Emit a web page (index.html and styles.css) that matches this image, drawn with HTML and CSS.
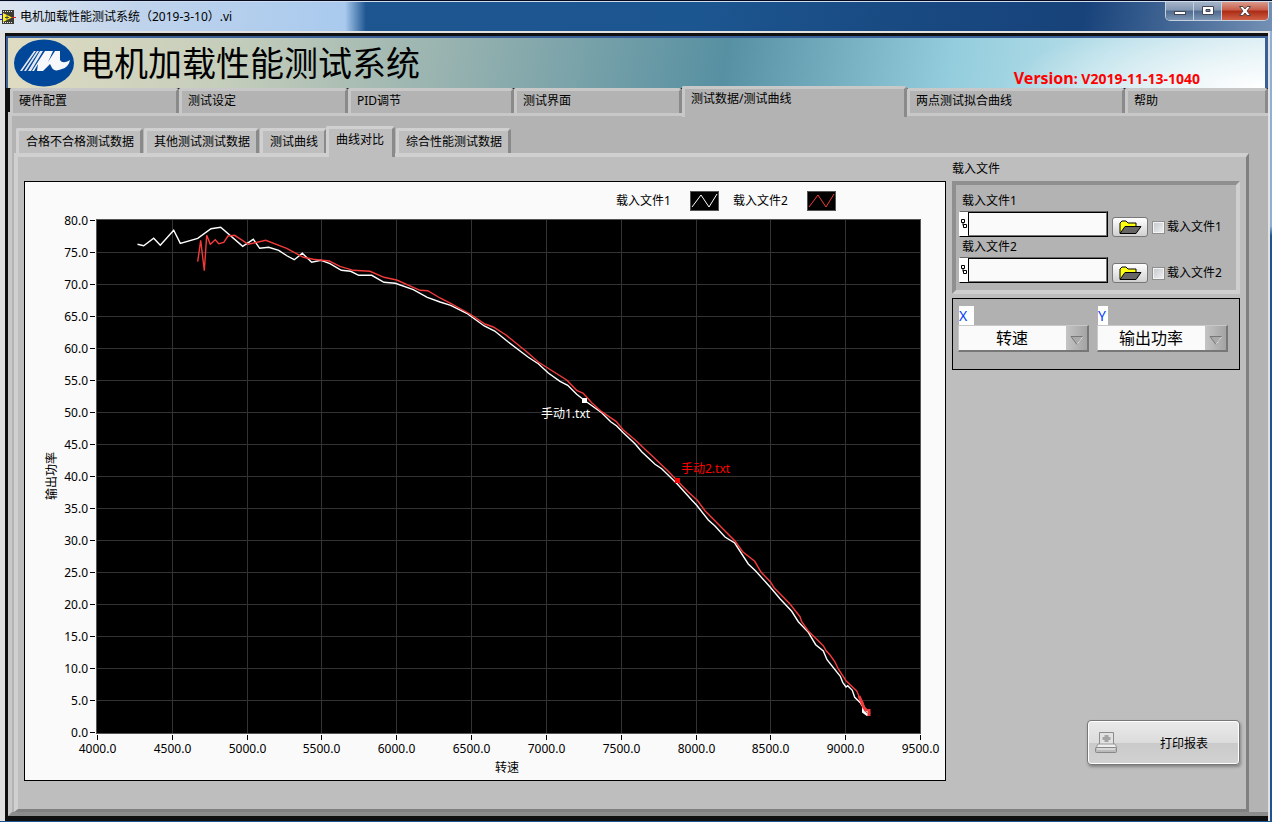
FILE: index.html
```html
<!DOCTYPE html>
<html lang="zh-CN">
<head>
    <meta charset="UTF-8">
    <meta name="viewport" content="width=device-width, initial-scale=1.0">
    <title>电机加载性能测试系统</title>
    <link rel="stylesheet" href="styles.css">
</head>
<body>
    <div class="window">
        <div class="titlebar">
            <svg class="app-icon" width="16" height="14" viewBox="0 0 16 14">
                <rect x="2" width="12" height="14" fill="#3c3c34"/>
                <path d="M3 1.5h10M3 12.5h10" stroke="#e8e8e0" stroke-dasharray="1 1"/>
                <path d="M0 4.5h3M0 9.5h3" stroke="#22c" />
                <path d="M12 7.5h4" stroke="#d22"/>
                <path d="M3 3l9 4.5-9 4.5z" fill="#ffee20"/>
                <path d="M5 7.5h4M7 5.5v4" stroke="#444"/>
            </svg>
            <span class="window-title">电机加载性能测试系统（2019-3-10）.vi</span>
            <div class="window-buttons">
                <button class="win-btn minimize" aria-label="最小化">
                    <svg width="12" height="12" viewBox="0 0 12 12"><rect x=".5" y="6.5" width="11" height="3" fill="#fff" stroke="#445"/></svg>
                </button>
                <button class="win-btn maximize" aria-label="最大化">
                    <svg width="12" height="12" viewBox="0 0 12 12"><path d="M.5 1.5h11v8H.5zM4 4.5h4v2H4z" fill="#fff" fill-rule="evenodd" stroke="#445"/></svg>
                </button>
                <button class="win-btn close" aria-label="关闭">
                    <svg width="12" height="12" viewBox="0 0 12 12"><path d="M.5 1.5H4L6 4l2-2.500h3.500L8 6l3.500 4.500H8L6 8l-2 2.500H.5L4 6z" fill="#fff" stroke="#544"/></svg>
                </button>
            </div>
        </div>

        <div class="client">
            <header class="banner">
                <svg class="logo" width="60" height="48" viewBox="0 0 60 48">
                    <ellipse cx="30" cy="24" rx="30" ry="23.5" fill="#00479a"/>
                    <path d="M6 32L20 12h2L8 32zM10 32L23 12h2L12 32zM14 32L26 12h3L17 32z" fill="#e4e8f2"/>
                    <path d="M18 32L31 12h8l-5 11 7-11h5v9c2 3 5 3 10 0-1 5-4 8-8 9-5 2-8 2-10-1l-2-4-7 7h-6l1-7-4 7z" fill="#f6f8fc"/>
                </svg>
                <h1>电机加载性能测试系统</h1>
                <p class="version"><span>Version</span>: V2019-11-13-1040</p>
            </header>

            <nav class="main-tabs">
                <button>硬件配置</button>
                <button>测试设定</button>
                <button>PID调节</button>
                <button>测试界面</button>
                <button class="active">测试数据/测试曲线</button>
                <button>两点测试拟合曲线</button>
                <button>帮助</button>
            </nav>

            <main class="main-panel">
                <nav class="sub-tabs">
                    <button>合格不合格测试数据</button>
                    <button>其他测试测试数据</button>
                    <button>测试曲线</button>
                    <button class="active">曲线对比</button>
                    <button>综合性能测试数据</button>
                </nav>

                <div class="sub-panel">
                    <section class="chart">
                        <svg id="chart" viewBox="25 182 920 598">
                            <g class="legend">
                                <text x="616" y="205">载入文件1</text>
                                <rect x="690.5" y="191.5" width="28" height="19"/>
                                <polyline class="curve-white" points="692,207 701,195 709,207 717,194"/>
                                <text x="733" y="205">载入文件2</text>
                                <rect x="807.5" y="191.5" width="28" height="19"/>
                                <polyline class="curve-red" points="809,207 818,195 826,207 834,194"/>
                            </g>
                            <rect class="plot" x="96.5" y="219.5" width="824" height="514"/>
                            <g id="grid"></g>
                            <g id="axes"></g>
                            <polyline id="curve1" class="curve-white"/>
                            <polyline id="curve2" class="curve-red"/>
                            <path class="tail-white" d="M861 703l3 5M863 707v5l4 3 2-2-4-3"/>
                            <path class="tail-red" d="M859 696l3 7 2 5 3 3M869 709v7"/>
                            <rect class="mark-white" x="582" y="398" width="5" height="5"/>
                            <text class="note-white" x="541" y="418">手动1.txt</text>
                            <rect class="mark-red" x="675" y="478" width="5" height="5"/>
                            <text class="note-red" x="681" y="473">手动2.txt</text>
                            <text class="axis-title" x="507" y="772">转速</text>
                            <text class="axis-title" x="-476" y="56" transform="rotate(-90)">输出功率</text>
                        </svg>
                    </section>

                    <aside class="sidebar">
                        <h2>载入文件</h2>
                        <div class="file-group">
                            <label for="file1">载入文件1</label>
                            <div class="file-row">
                                <div class="path-box">
                                    <svg width="8" height="24" viewBox="0 0 8 24"><path d="M1.5 7.5h3v3h-3zM3 10.5v3M3.5 12.5h3v3h-3z" fill="none" stroke="#000"/></svg>
                                    <input type="text" id="file1">
                                </div>
                                <button class="browse" aria-label="浏览文件1">
                                    <svg width="23" height="15" viewBox="0 0 23 15"><path d="M1 13V3l2-2h4l2 2h8v3" fill="#ffff10" stroke="#000"/><path d="M1 13.5l5-7h16l-5 7z" fill="#666" stroke="#000"/></svg>
                                </button>
                                <label class="check"><input type="checkbox">载入文件1</label>
                            </div>
                            <label for="file2">载入文件2</label>
                            <div class="file-row">
                                <div class="path-box">
                                    <svg width="8" height="24" viewBox="0 0 8 24"><path d="M1.5 7.5h3v3h-3zM3 10.5v3M3.5 12.5h3v3h-3z" fill="none" stroke="#000"/></svg>
                                    <input type="text" id="file2">
                                </div>
                                <button class="browse" aria-label="浏览文件2">
                                    <svg width="23" height="15" viewBox="0 0 23 15"><path d="M1 13V3l2-2h4l2 2h8v3" fill="#ffff10" stroke="#000"/><path d="M1 13.5l5-7h16l-5 7z" fill="#666" stroke="#000"/></svg>
                                </button>
                                <label class="check"><input type="checkbox">载入文件2</label>
                            </div>
                        </div>

                        <div class="axis-group">
                            <div class="axis-field">
                                <label for="axisX">X</label>
                                <div class="ring">
                                    <select id="axisX"><option>转速</option></select>
                                    <span class="arrow"><svg width="14" height="11" viewBox="0 0 14 11"><path d="M1 1.5h12l-6 8z" fill="#aaa" stroke="#777"/><path d="M7 9.5l6-8" stroke="#ddd"/></svg></span>
                                </div>
                            </div>
                            <div class="axis-field">
                                <label for="axisY">Y</label>
                                <div class="ring">
                                    <select id="axisY"><option>输出功率</option></select>
                                    <span class="arrow"><svg width="14" height="11" viewBox="0 0 14 11"><path d="M1 1.5h12l-6 8z" fill="#aaa" stroke="#777"/><path d="M7 9.5l6-8" stroke="#ddd"/></svg></span>
                                </div>
                            </div>
                        </div>

                        <button class="print">
                            <svg width="24" height="24" viewBox="0 0 24 24">
                                <path d="M5.5 1.5h14v12h-14z" fill="#e2e2e2" stroke="#8c8c8c"/>
                                <path d="M10.500 4h4v2h2v3h-2v2h-4V9h-2V6h2z" fill="#a4a4a4"/>
                                <path d="M4 13h17l2 4H2z" fill="#eee" stroke="#999"/>
                                <rect x="1.5" y="16.5" width="21" height="5" rx="1" fill="#bbb" stroke="#888"/>
                                <path d="M3 18h18" stroke="#f4f4f4"/>
                            </svg>
                            <span>打印报表</span>
                        </button>
                    </aside>
                </div>
            </main>
        </div>
    </div>

    <script src="script.js"></script>
</body>
</html>
```

FILE: styles.css
```css
* {
    margin: 0;
    padding: 0;
    box-sizing: border-box;
}

body {
    font-family: 'Noto Sans', 'Noto Sans CJK SC', sans-serif;
    font-size: 12px;
    color: #000;
}

button,
input,
select {
    font: inherit;
    color: inherit;
}

.window {
    display: flex;
    flex-direction: column;
    min-height: 100vh;
    background: linear-gradient(#8fb0d4 0, #8fb0d4 225px, #1d5590 235px);
    border-top: 1px solid #060a20;
}

/* Title bar */
.titlebar {
    display: flex;
    align-items: center;
    height: 30px;
    padding-right: 3px;
    border-top: 1px solid #cfdcec;
    background:
        linear-gradient(90deg, #dde6f0 0, #bfd3ec 140px, #a9caee 345px, rgba(29, 85, 144, 0) 366px),
        linear-gradient(100deg, #1f5590 0, #1c5690 55%, #194a82 70%, #17427a 85%, #7490b4 100%);
}

.app-icon {
    margin-right: 4px;
}

.window-title {
    flex: 1;
    line-height: 28px;
    white-space: nowrap;
}

.window-buttons {
    display: flex;
    align-self: flex-start;
    height: 19px;
    border: 1px solid #c5d0de;
    border-top: none;
    border-radius: 0 0 5px 5px;
    overflow: hidden;
}

.win-btn {
    display: flex;
    align-items: center;
    justify-content: center;
    width: 28px;
    border: none;
    border-right: 1px solid #c5d0de;
    background: linear-gradient(#a5b4c8 0, #8397b2 45%, #4e698e 50%, #7c95b4 100%);
}

.win-btn.close {
    width: 46px;
    border-right: none;
    background: linear-gradient(#d99a8c 0, #c75c48 45%, #ac2a14 50%, #cf6046 100%);
}

/* Client area */
.client {
    flex: 1;
    display: flex;
    flex-direction: column;
    margin: 0 2px 1px 0;
    padding: 3px 0 5px 3px;
    border: solid #e1e1e1;
    border-width: 2px 2px 0 5px;
    background: #101010;
}

.banner {
    display: flex;
    align-items: center;
    height: 52px;
    padding: 0 65px 0 6px;
    margin-left: -2px;
    border: solid #3a5f97;
    border-width: 2px 3px 0 2px;
    background:
        radial-gradient(ellipse 260px 70px at 100% 100%, #fff 0, rgba(255, 255, 255, 0) 100%),
        linear-gradient(100deg, #e0dcc2 0, #c4cdbb 18%, #95b1af 36%, #5790a2 57%, #94cddd 75%, #b4dde8 86%, #d4eaf1 100%);
}

h1 {
    flex: 1;
    margin-left: 6px;
    font-size: 34px;
    font-weight: 400;
    line-height: 48px;
    white-space: nowrap;
}

.version {
    align-self: flex-end;
    color: #f00;
    font-size: 14px;
    font-weight: bold;
    line-height: 19px;
}

.version span {
    font-size: 16px;
}

/* Tabs */
.main-tabs {
    position: relative;
    display: grid;
    grid-template-columns: 169fr 169fr 166fr 168fr 225fr 218fr 143fr;
    height: 24px;
    padding-left: 2px;
    background: #101010;
}

.main-tabs button,
.sub-tabs button {
    border: solid;
    border-width: 3px 3px 0 3px;
    border-color: #c8c8c8 #8a8a8a #c8c8c8 #c8c8c8;
    border-radius: 2px 3px 0 0;
    background: #b3b3b3;
    text-align: left;
    white-space: nowrap;
}

.main-tabs button {
    padding: 0 6px 4px;
}

.main-tabs .active {
    margin: -2px 0 -4px;
    padding-bottom: 10px;
}

.main-panel {
    flex: 1;
    display: flex;
    flex-direction: column;
    padding: 12px 19px 0 2px;
    border: 4px solid;
    border-color: #c8c8c8 #b3b3b3 #8c8c8c #c8c8c8;
    border-right: none;
    background: #b3b3b3;
}

.sub-tabs {
    position: relative;
    display: flex;
    gap: 1px;
    height: 25px;
    padding-left: 2px;
}

.sub-tabs button {
    padding: 0 6px 3px 7px;
    border-color: #d0d0d0 #8a8a8a #d0d0d0 #d0d0d0;
    background: #bebebe;
}

.sub-tabs .active {
    margin: -2px 0 -4px -2px;
    padding: 0 8px 8px 7px;
}

.sub-panel {
    flex: 1;
    display: flex;
    gap: 6px;
    padding: 0 6px;
    border: solid;
    border-width: 4px 3px 3px 4px;
    border-color: #d0d0d0 #808080 #808080 #d0d0d0;
    background: #bebebe;
}

/* Chart */
.chart {
    flex: 1;
    align-self: flex-start;
    margin-top: 24px;
    border: 1px solid #000;
    background: #fafafa;
}

.chart svg {
    display: block;
    width: 100%;
}

.chart polyline {
    fill: none;
}

.curve-white {
    stroke: #fff;
}

.curve-red {
    stroke: #f33a3a;
}

#curve1,
#curve2 {
    stroke-width: 1.4;
}

.legend rect,
.plot {
    fill: #000;
    stroke: #555;
}

.grid-line {
    stroke: #333;
    shape-rendering: crispEdges;
}

.tick {
    stroke: #000;
    shape-rendering: crispEdges;
}

.tick-x,
.axis-title {
    text-anchor: middle;
}

.tick-y {
    text-anchor: end;
}

.tail-white,
.tail-red {
    fill: none;
    stroke: #fff;
    stroke-width: 2;
}

.tail-red {
    stroke: #f33a3a;
    stroke-width: 3;
}

.mark-white,
.note-white {
    fill: #fff;
}

.mark-red,
.note-red {
    fill: #f00;
}

/* Sidebar */
.sidebar {
    display: flex;
    flex-direction: column;
    width: 288px;
}

h2 {
    font-size: 12px;
    font-weight: normal;
    line-height: 24px;
}

.file-group {
    padding: 6px 3px 7px;
    border: 4px solid;
    border-color: #8f8f8f #cfcfcf #cfcfcf #8f8f8f;
    background: #b3b3b3;
}

.file-group > label {
    display: block;
    padding-left: 3px;
    line-height: 20px;
}

.file-row {
    display: flex;
    align-items: flex-end;
    gap: 4px;
}

.path-box {
    flex: 1;
    display: flex;
    border: 1px solid #000;
    border-color: #666 #000 #000 #fff;
    background: #fff;
}

.path-box input {
    flex: 1;
    width: 0;
    height: 24px;
    padding: 0 4px;
    border: 1px solid #000;
    border-color: #000 #777 #777 #000;
    background: #fafafa;
}

.browse {
    display: flex;
    align-items: center;
    justify-content: center;
    width: 36px;
    height: 20px;
    border: 1px solid #777;
    border-radius: 3px;
    background: linear-gradient(#fff, #d0d0d0);
}

.check {
    display: flex;
    align-items: center;
    gap: 2px;
    width: 81px;
    line-height: 20px;
    white-space: nowrap;
}

.check input {
    appearance: none;
    width: 13px;
    height: 13px;
    border: 1px solid #8e8f8f;
    box-shadow: inset 0 0 0 1px #f4f4f4;
    background: linear-gradient(135deg, #c3c7cc, #f2f2f2);
}

.check input:checked {
    background: #246;
}

.axis-group {
    display: flex;
    gap: 8px;
    height: 72px;
    margin-top: 4px;
    padding: 7px 11px 0 5px;
    border: 1px solid #000;
    background: #b1b1b1;
}

.axis-field {
    flex: 1;
}

.axis-field label {
    display: block;
    width: 15px;
    margin-left: 1px;
    background: #fff;
    color: #0040ff;
    font-size: 14px;
    line-height: 19px;
}

.axis-field + .axis-field label {
    width: 10px;
}

.ring {
    position: relative;
    border: solid;
    border-width: 1px 2px 2px 1px;
    border-color: #c8c8c8 #777 #777 #c8c8c8;
}

.ring select {
    display: block;
    appearance: none;
    width: 100%;
    height: 24px;
    padding-right: 22px;
    border: none;
    background: #fafafa;
    font-size: 16px;
    text-align: center;
    text-align-last: center;
}

.arrow {
    position: absolute;
    top: 0;
    right: 0;
    bottom: 0;
    display: flex;
    align-items: center;
    justify-content: center;
    width: 21px;
    padding-top: 4px;
    background: linear-gradient(90deg, #c4c4c4, #a4a4a4);
    pointer-events: none;
}

.print {
    display: flex;
    align-items: center;
    align-self: flex-end;
    width: 153px;
    height: 45px;
    margin: auto 0 44px;
    padding: 0 31px 0 6px;
    border: 1px solid #777;
    border-radius: 4px;
    background: linear-gradient(#eaeaea 0, #dcdcdc 50%, #cacaca 52%, #d2d2d2 100%);
    box-shadow: inset 0 0 0 1px #fff, 1px 2px 3px rgba(0, 0, 0, 0.3);
}

.print span {
    flex: 1;
    text-align: right;
}
```

FILE: script.js
```js
const SVG_NS = 'http://www.w3.org/2000/svg';
const left = 97, top_ = 220, right = 920, bottom = 733;

const curve1 = [
    [137.5,244.3],[143.7,245.7],[153.7,238.3],[160.3,245.3],[173.7,230.3],[180.3,243.3],[197.7,238.3],[211,228.7],
    [220.7,227.3],[242.7,246.3],[253.3,239.3],[259.7,248.3],[268.7,247.3],[278.7,250.3],[287.3,256],[294.3,259.7],
    [302.3,253.3],[311.7,262.3],[321,260.3],[330,263.7],[341.3,270.3],[350.7,271.3],[358.7,275.3],[371.7,275.3],
    [384,282.3],[395.3,283.3],[413.3,289.7],[427.3,297.3],[440,302],[450.7,305.3],[466.7,313.3],[484.3,326],
    [494.7,331],[508.3,342],[528.3,357.3],[538.3,363.7],[548.3,373],[560,381.3],[567.7,385.3],[576.7,394.3],
    [584.3,400.3],[601.7,412.7],[610.7,421.7],[616.7,426],[623.3,432.7],[635,443.7],[641.7,451.7],[655,464.3],
    [661.7,468.7],[677.3,484],[691.7,500],[696.7,505.3],[708.3,520],[715,526],[725,537],[734.7,543],
    [748.3,564],[755.7,571],[770.3,587.3],[780,598.7],[791.7,611.3],[798.3,621.7],[808.3,632.3],[815.7,644.7],
    [823.3,651],[827,659.7],[840.3,676.3],[842.7,682.3],[846,687],[847.7,685.7],[852.3,690.3],[854.7,697.3],
    [860.3,702.7],[863,706.7],[863.3,711],[867,714.3]
];

const curve2 = [
    [197.7,261.7],[200.7,240.3],[204.3,270.7],[206.7,235.3],[210.3,244.3],[215.3,239.7],[218.7,243.7],[223.7,242.3],
    [228,236],[234.7,235.3],[248.3,244.3],[265.7,240.3],[286.7,248.3],[303.3,257.3],[313.3,259.3],[329.3,261],
    [340,266.3],[353.3,270.3],[370,271.3],[384,277.3],[396.7,280],[420,290.3],[427.7,290.7],[440,298],
    [450.7,303.3],[470,314],[485,324],[493.3,327],[506,335],[526.7,351.7],[538.3,362],[566.7,380],
    [576.7,390.3],[583.3,393.3],[591.7,402.7],[601.7,411.7],[616,421.3],[623.3,430],[635,439.7],[653.3,457],
    [668.3,471.3],[677.3,480.7],[688.3,492],[697.3,500.3],[705,510.7],[725,531],[735,541],[742.7,551.7],
    [754.7,561.3],[761,572],[770.3,581.7],[774.3,588],[790,604],[800,616.7],[801.7,621.7],[808.3,631],
    [823.3,645.7],[826.3,651],[830.3,655.3],[835,662],[838.3,669],[846,680.7],[856.7,691],[859.3,697],
    [862.7,702],[864,706.7],[867.3,710.7],[869.3,712.3]
];

function line(parent, x1, y1, x2, y2, cls) {
    const el = document.createElementNS(SVG_NS, 'line');
    el.setAttribute('x1', x1);
    el.setAttribute('y1', y1);
    el.setAttribute('x2', x2);
    el.setAttribute('y2', y2);
    el.setAttribute('class', cls);
    parent.appendChild(el);
}

function label(parent, x, y, text, cls) {
    const el = document.createElementNS(SVG_NS, 'text');
    el.setAttribute('x', x);
    el.setAttribute('y', y);
    el.setAttribute('class', cls);
    el.textContent = text;
    parent.appendChild(el);
}

const grid = document.getElementById('grid');
const axes = document.getElementById('axes');

// Y axis: 0 - 80
for (let v = 0; v <= 80; v += 5) {
    const y = bottom - 0.5 - v * 6.4;
    if (v > 0 && v < 80) line(grid, left, y, right, y, 'grid-line');
    line(axes, 90, y, 95, y, 'tick');
    label(axes, 88, y + 4, v.toFixed(1), 'tick-y');
}

// X axis: 4000 - 9500
for (let v = 4000; v <= 9500; v += 500) {
    const x = Math.round(left + (v - 4000) * (right - left) / 5500) + 0.5;
    if (v > 4000 && v < 9500) line(grid, x, top_, x, bottom, 'grid-line');
    line(axes, x, 735, x, 740, 'tick');
    label(axes, x, 753, v.toFixed(1), 'tick-x');
}

document.getElementById('curve1').setAttribute('points', curve1.join(' '));
document.getElementById('curve2').setAttribute('points', curve2.join(' '));
```
